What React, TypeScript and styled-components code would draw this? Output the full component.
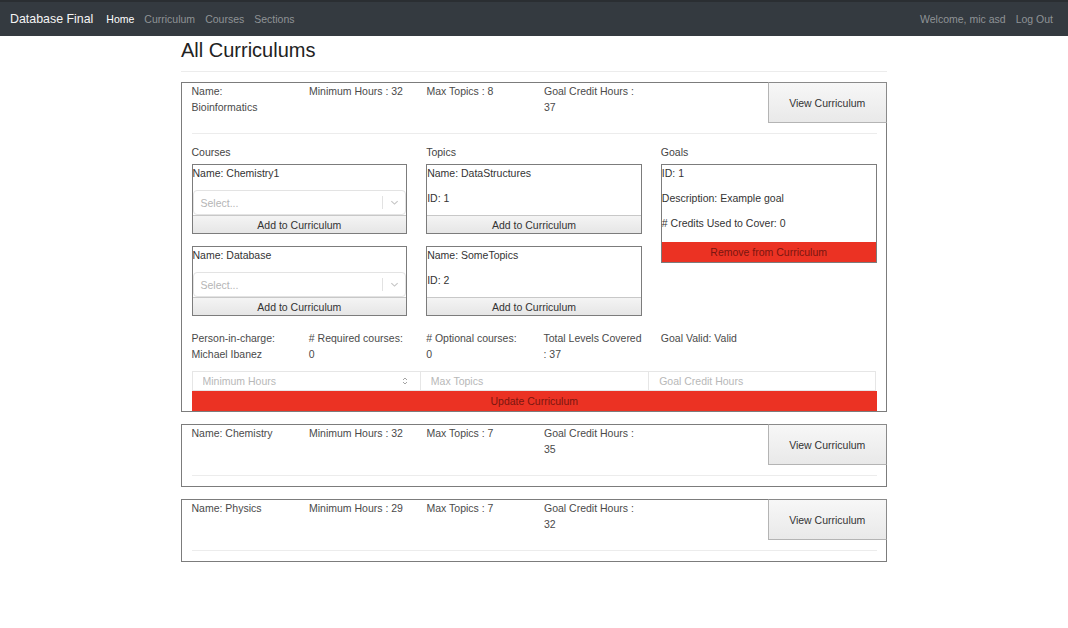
import React from "react";
import styled, { createGlobalStyle } from "styled-components";

const GlobalStyle = createGlobalStyle`
  body {
    margin: 0;
    font-family: 'Liberation Sans', Arial, sans-serif;
    background: #fff;
    color: #444;
  }
  * { box-sizing: border-box; }
`;

const Navbar = styled.header`
  height: 36px;
  background: #343a40;
  border-top: 2px solid #2a2e32;
  display: flex;
  align-items: center;
  padding: 0 15px 0 10px;
`;

const Brand = styled.div`
  color: #f4f4f4;
  font-size: 12.4px;
  margin-right: 13px;
`;

const NavLink = styled.a<{ $active?: boolean; $last?: boolean }>`
  color: ${(p) => (p.$active ? "#fff" : "#8f9396")};
  font-size: 10.5px;
  text-decoration: none;
  margin-right: ${(p) => (p.$last ? 0 : 10)}px;
`;

const Spacer = styled.div`
  flex: 1;
`;

const Container = styled.main`
  width: 706px;
  margin: 0 auto;
`;

const Title = styled.h1`
  font-size: 20px;
  font-weight: 400;
  color: #222;
  margin: 2px 0 0;
  line-height: 24px;
`;

const Rule = styled.hr<{ $inset?: boolean }>`
  border: 0;
  border-top: 1px solid #ececec;
  margin: ${(p) => (p.$inset ? "10px 9.5px" : "9px 0 10px")};
`;

const Card = styled.section`
  border: 1px solid #7c7c7c;
  margin-bottom: 12px;
`;

const HeadRow = styled.div`
  display: grid;
  grid-template-columns: repeat(6, 1fr);
  height: 41px;
  margin-top: -1px;
  margin-right: -1px;
`;

const Cell = styled.div`
  padding: 1px 4px 0 9.5px;
  font-size: 10.5px;
  line-height: 16px;
  white-space: nowrap;
  color: #4a4a4a;
`;

const ViewButton = styled.button`
  grid-column: 6;
  margin-left: -2px;
  border: 1px solid #b4b4b4;
  border-top-color: #8a8a8a;
  border-right-color: #8a8a8a;
  background: linear-gradient(#f7f7f7, #e9e9e9);
  font-family: inherit;
  font-size: 10.5px;
  color: #333;
  padding: 0;
`;

const Body = styled.div`
  padding: 0 9.5px;
`;

const Sections = styled.div`
  display: grid;
  grid-template-columns: repeat(3, 1fr);
  column-gap: 19px;
`;

const SectionTitle = styled.div`
  font-size: 10.5px;
  line-height: 16px;
  margin-bottom: 4px;
`;

const Box = styled.div`
  border: 1px solid #7c7c7c;
  margin-bottom: 12px;
  display: flex;
  flex-direction: column;
`;

const BoxText = styled.p<{ $gap?: number }>`
  margin: 0 0 ${(p) => p.$gap ?? 9}px;
  font-size: 10.5px;
  line-height: 16px;
  color: #333;
`;

const SelectControl = styled.div`
  height: 25px;
  border: 1px solid #e3e3e3;
  border-radius: 4px;
  display: flex;
  align-items: center;
  padding-left: 7px;
  font-size: 10.5px;
  color: #b5b5b5;
`;

const SelectSeparator = styled.span`
  width: 1px;
  height: 13px;
  background: #e2e2e2;
  margin: 0 7px 0 auto;
`;

const Chevron = styled.svg`
  width: 9px;
  height: 9px;
  margin-right: 6px;
`;

const AddButton = styled.button`
  height: 18px;
  border: 0;
  border-top: 1px solid #c8c8c8;
  background: linear-gradient(#f4f4f4, #e6e6e6);
  font-family: inherit;
  font-size: 10.5px;
  color: #333;
  padding: 0;
`;

const RedButton = styled.button<{ $h: number }>`
  height: ${(p) => p.$h}px;
  border: 0;
  background: #eb3223;
  font-family: inherit;
  font-size: 10.5px;
  color: #7a1610;
  padding: 0;
  width: 100%;
`;

const InfoRow = styled.div`
  display: grid;
  grid-template-columns: repeat(6, 1fr);
  margin: 1px -9.5px 9px;
`;

const Fields = styled.div`
  display: grid;
  grid-template-columns: repeat(3, 1fr);
`;

const Field = styled.div`
  height: 20px;
  border: 1px solid #e6e6e6;
  border-right-width: 0;
  display: flex;
  align-items: center;
  &:last-child { border-right-width: 1px; }
`;

const FieldInput = styled.input`
  flex: 1;
  min-width: 0;
  border: 0;
  outline: 0;
  padding: 0 0 0 10px;
  font-family: inherit;
  font-size: 10.5px;
  color: #333;
  background: transparent;
  &::placeholder { color: #b8b8b8; }
`;

const Spin = styled.svg`
  width: 6px;
  height: 10px;
  margin-right: 12px;
`;

const UpdateWrap = styled.div`
  padding-left: 0.5px;
`;

const ChevronIcon = () => (
  <Chevron viewBox="0 0 10 10">
    <path d="M1.5 3.5 L5 6.8 L8.5 3.5" fill="none" stroke="#c4c4c4" strokeWidth="1.2" />
  </Chevron>
);

const courses = ["Chemistry1", "Database"];
const topics = [
  { name: "DataStructures", id: 1 },
  { name: "SomeTopics", id: 2 },
];

const others = [
  { name: "Chemistry", min: 32, topics: 7, goal: 35 },
  { name: "Physics", min: 29, topics: 7, goal: 32 },
];

const App: React.FC = () => {
  return (
    <>
      <GlobalStyle />
      <Navbar>
        <Brand>Database Final</Brand>
        <NavLink $active href="#">Home</NavLink>
        <NavLink href="#">Curriculum</NavLink>
        <NavLink href="#">Courses</NavLink>
        <NavLink href="#">Sections</NavLink>
        <Spacer />
        <NavLink href="#">Welcome, mic asd</NavLink>
        <NavLink $last href="#">Log Out</NavLink>
      </Navbar>
      <Container>
        <Title>All Curriculums</Title>
        <Rule />

        <Card>
          <HeadRow>
            <Cell>Name:<br />Bioinformatics</Cell>
            <Cell>Minimum Hours : 32</Cell>
            <Cell>Max Topics : 8</Cell>
            <Cell>Goal Credit Hours :<br />37</Cell>
            <ViewButton>View Curriculum</ViewButton>
          </HeadRow>
          <Rule $inset />
          <Body>
            <Sections>
              <div>
                <SectionTitle>Courses</SectionTitle>
                {courses.map((c) => (
                  <Box key={c}>
                    <BoxText>Name: {c}</BoxText>
                    <SelectControl>
                      Select...
                      <SelectSeparator />
                      <ChevronIcon />
                    </SelectControl>
                    <AddButton>Add to Curriculum</AddButton>
                  </Box>
                ))}
              </div>
              <div>
                <SectionTitle>Topics</SectionTitle>
                {topics.map((t) => (
                  <Box key={t.id}>
                    <BoxText>Name: {t.name}</BoxText>
                    <BoxText>ID: {t.id}</BoxText>
                    <AddButton>Add to Curriculum</AddButton>
                  </Box>
                ))}
              </div>
              <div>
                <SectionTitle>Goals</SectionTitle>
                <Box>
                  <BoxText>ID: 1</BoxText>
                  <BoxText>Description: Example goal</BoxText>
                  <BoxText $gap={11}># Credits Used to Cover: 0</BoxText>
                  <RedButton $h={20}>Remove from Curriculum</RedButton>
                </Box>
              </div>
            </Sections>
            <InfoRow>
              <Cell>Person-in-charge:<br />Michael Ibanez</Cell>
              <Cell># Required courses:<br />0</Cell>
              <Cell># Optional courses:<br />0</Cell>
              <Cell>Total Levels Covered<br />: 37</Cell>
              <Cell>Goal Valid: Valid</Cell>
            </InfoRow>
            <Fields>
              <Field>
                <FieldInput placeholder="Minimum Hours" />
                <Spin viewBox="0 0 6 10">
                  <path d="M1 4 L3 2 L5 4 M1 6 L3 8 L5 6" fill="none" stroke="#9a9a9a" strokeWidth="0.9" />
                </Spin>
              </Field>
              <Field>
                <FieldInput placeholder="Max Topics" />
              </Field>
              <Field>
                <FieldInput placeholder="Goal Credit Hours" />
              </Field>
            </Fields>
            <UpdateWrap>
              <RedButton $h={20}>Update Curriculum</RedButton>
            </UpdateWrap>
          </Body>
        </Card>

        {others.map((o) => (
          <Card key={o.name}>
            <HeadRow>
              <Cell>Name: {o.name}</Cell>
              <Cell>Minimum Hours : {o.min}</Cell>
              <Cell>Max Topics : {o.topics}</Cell>
              <Cell>Goal Credit Hours :<br />{o.goal}</Cell>
              <ViewButton>View Curriculum</ViewButton>
            </HeadRow>
            <Rule $inset />
          </Card>
        ))}
      </Container>
    </>
  );
};

export default App;
